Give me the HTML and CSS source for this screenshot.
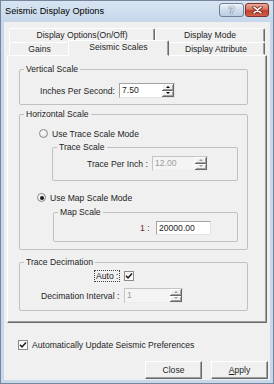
FILE: index.html
```html
<!DOCTYPE html>
<html lang="en">
<head>
  <meta charset="UTF-8" />
  <meta name="viewport" content="width=device-width, initial-scale=1.0" />
  <title>Seismic Display Options</title>
  <link rel="stylesheet" href="styles.css">
</head>
<body>
  <div class="window">
    <!-- ----------  TITLE BAR  ---------- -->
    <div class="titlebar">
      <span class="title">Seismic Display Options</span>
      <div class="caption">
        <span class="cap-btn cap-help">?</span>
        <span class="cap-btn cap-close">
          <svg width="11" height="8" viewBox="0 0 11 8">
            <path d="M2 1.2 L9 6.8 M9 1.2 L2 6.8" stroke="#6a2319" stroke-width="3.2" stroke-linecap="round"/>
            <path d="M2 1.2 L9 6.8 M9 1.2 L2 6.8" stroke="#fff" stroke-width="1.6" stroke-linecap="round"/>
          </svg>
        </span>
      </div>
    </div>

    <div class="client">
      <!-- ----------  TABS  ---------- -->
      <div class="tabs">
        <div class="tab-row back">
          <div class="tab w-opts">Display Options(On/Off)</div>
          <div class="tab w-mode">Display Mode</div>
        </div>
        <div class="tab-row front">
          <div class="tab w-gains">Gains</div>
          <div class="tab active w-scales">Seismic Scales</div>
          <div class="tab w-attr">Display Attribute</div>
        </div>
      </div>

      <!-- ----------  TAB PAGE  ---------- -->
      <div class="panel">
        <fieldset class="group g-vertical">
          <legend>Vertical Scale</legend>
          <div class="row row-ips">
            <span class="lbl lbl-ips">Inches Per Second:</span>
            <div class="spin w-ips">
              <span class="spin-val">7.50</span>
              <span class="spin-btns"><span class="sb up"></span><span class="sb down"></span></span>
            </div>
          </div>
        </fieldset>

        <fieldset class="group g-horizontal">
          <legend>Horizontal Scale</legend>
          <div class="row radio-row r-trace">
            <span class="radio"></span>
            <span>Use Trace Scale Mode</span>
          </div>

          <fieldset class="group g-trace">
            <legend>Trace Scale</legend>
            <div class="row row-tpi">
              <span class="lbl lbl-tpi">Trace Per Inch :</span>
              <div class="spin disabled w-tpi">
                <span class="spin-val">12.00</span>
                <span class="spin-btns"><span class="sb up"></span><span class="sb down"></span></span>
              </div>
            </div>
          </fieldset>

          <div class="row radio-row r-map">
            <span class="radio checked"></span>
            <span>Use Map Scale Mode</span>
          </div>

          <fieldset class="group g-map">
            <legend>Map Scale</legend>
            <div class="row row-map">
              <span class="lbl lbl-ratio">1 :</span>
              <div class="textbox">20000.00</div>
            </div>
          </fieldset>
        </fieldset>

        <fieldset class="group g-decim">
          <legend>Trace Decimation</legend>
          <div class="row row-auto">
            <span class="lbl lbl-auto">Auto :</span>
            <span class="check">
              <svg width="8" height="8" viewBox="0 0 8 8"><path d="M1 3.8 L3 6 L7 1.5" fill="none" stroke="#1a1a1a" stroke-width="1.5"/></svg>
            </span>
          </div>
          <div class="row row-decim">
            <span class="lbl lbl-decim">Decimation Interval :</span>
            <div class="spin disabled w-decim">
              <span class="spin-val">1</span>
              <span class="spin-btns"><span class="sb up"></span><span class="sb down"></span></span>
            </div>
          </div>
        </fieldset>
      </div>

      <!-- ----------  FOOTER  ---------- -->
      <div class="row check-row">
        <span class="check">
          <svg width="8" height="8" viewBox="0 0 8 8"><path d="M1 3.8 L3 6 L7 1.5" fill="none" stroke="#1a1a1a" stroke-width="1.5"/></svg>
        </span>
        <span>Automatically Update Seismic Preferences</span>
      </div>

      <div class="actions">
        <button class="btn">Close</button>
        <button class="btn"><u>A</u>pply</button>
      </div>
    </div>
  </div>
</body>
</html>
```

FILE: styles.css
```css
/* —————— RESET —————— */
*{margin:0;padding:0;box-sizing:border-box;}
body{
  background:#fff;
  font-family:"Liberation Sans",Arial,sans-serif;
  font-size:8.6px;
  color:#1e1e1e;
}

/* —————— WINDOW FRAME —————— */
.window{
  width:274px;
  height:384px;
  border:1px solid #74879f;
  background:#c8d8eb;
  display:flex;
  flex-direction:column;
}
.titlebar{
  height:21px;
  flex:none;
  display:flex;
  justify-content:space-between;
  align-items:flex-start;
  padding:2px 4px 0 4px;
  background:linear-gradient(#d8e4f2,#c6d7eb);
}
.title{
  font-size:9.2px;
  line-height:16px;
  color:#000;
}
.caption{display:flex;gap:1px;}
.cap-btn{
  height:14px;
  border:1px solid #6f7f96;
  border-radius:3px;
  display:flex;
  align-items:center;
  justify-content:center;
}
.cap-help{
  width:25px;
  background:linear-gradient(#eef3f9,#cfdcec 50%,#bccde3);
  color:#f4f7fb;
  font-weight:bold;
  font-size:10px;
  text-shadow:0 0 1px #3d4c63,0 0 1px #3d4c63;
}
.cap-close{
  width:24px;
  border-color:#7d3128;
  background:linear-gradient(#e9ab9c,#d3705f 45%,#c5402e 55%,#d2604a);
}

/* —————— CLIENT AREA —————— */
.client{
  height:358px;
  flex:none;
  margin:0 3px;
  padding:6px 3px 0 3px;
  background:#f0f0f0;
}

/* —————— TABS —————— */
.tabs{margin-left:2px;}
.tab-row{display:flex;align-items:flex-start;}
.tab-row.back{height:14px;}
.tab-row.front{height:13px;}
.tab{
  height:100%;
  text-align:center;
  white-space:nowrap;
  border:1px solid;
  border-color:#fff #696969 transparent #fff;
  border-radius:2px 2px 0 0;
  box-shadow:inset -1px 0 0 #a0a0a0;
  background:#f0f0f0;
}
.back .tab{line-height:12px;}
.front .tab{height:13px;line-height:12px;}
.tab.active{
  position:relative;
  z-index:1;
  height:16px;
  margin:-2px -2px -1px -2px;
  line-height:12px;
}
.w-opts{width:146px;}
.w-mode{width:110px;}
.w-gains{width:61px;}
.w-scales{width:101px;}
.w-attr{width:98px;}

.panel{
  height:268px;
  border:1px solid;
  border-color:#fff #696969 #696969 #fff;
  box-shadow:inset -1px -1px 0 #a0a0a0;
  background:#f0f0f0;
  padding-left:11px;
}

/* —————— GROUP BOXES —————— */
.group{
  width:229px;
  border:1px solid #c0c0c0;
  border-radius:2px;
  min-inline-size:0;
}
.group legend{
  margin-left:4px;
  padding:0 2px;
  line-height:13px;
}
.g-vertical{margin-top:7px;padding:7px 0 6px;}
.g-horizontal{margin-top:3px;padding:6px 0 7px;}
.g-trace{width:186px;margin:1px 0 0 32px;padding:2px 0 9px;}
.g-map{width:185px;margin:2px 0 0 33px;padding:2px 0 6px;}
.g-decim{margin-top:6px;padding:1px 0 7px;}

/* —————— ROWS —————— */
.row{display:flex;align-items:center;white-space:nowrap;}
.lbl{flex:none;}
.row-ips{height:15px;padding-left:20px;}
.lbl-ips{width:76px;margin-right:3px;}
.row-tpi{height:15px;padding-left:34px;}
.lbl-tpi{width:62px;margin-right:3px;}
.row-map{height:14px;padding-left:86px;}
.lbl-ratio{width:13px;margin-right:3px;color:#6b2d2d;}
.row-auto{height:11px;padding-left:75px;}
.lbl-auto{
  width:24px;
  padding-left:1px;
  line-height:10px;
  outline:1px dotted #444;
  margin-right:5px;
}
.row-decim{height:15px;margin-top:7px;padding-left:21px;}
.lbl-decim{width:80px;margin-right:3px;}

.radio-row{height:13px;gap:4px;}
.r-trace{padding-left:19px;}
.r-map{padding-left:17px;margin-top:10px;}

/* —————— CONTROLS —————— */
.spin{
  display:flex;
  height:15px;
  border:1px solid #a3a3a3;
  border-right-color:#e2e2e2;
  border-bottom-color:#e2e2e2;
  background:#fff;
}
.w-ips,.w-tpi{width:56px;}
.w-decim{width:59px;}
.spin-val{flex:1;padding-left:2px;line-height:13px;}
.spin-btns{width:12px;display:flex;flex-direction:column;}
.sb{
  flex:1;
  display:flex;
  align-items:center;
  justify-content:center;
  background:#f0f0f0;
  border-right:1px solid #696969;
  border-bottom:1px solid #696969;
  box-shadow:inset 1px 1px 0 #fff,inset -1px -1px 0 #a0a0a0;
}
.sb::after{content:"";border-left:2px solid transparent;border-right:2px solid transparent;}
.sb.up::after{border-bottom:2px solid #000;}
.sb.down::after{border-top:2px solid #000;}
.spin.disabled{background:#f4f4f4;border-color:#c4c4c4 #ececec #ececec #c4c4c4;color:#9c9c9c;}
.spin.disabled .sb.up::after{border-bottom-color:#a0a0a0;}
.spin.disabled .sb.down::after{border-top-color:#a0a0a0;}

.textbox{
  width:55px;
  height:14px;
  line-height:12px;
  padding-left:2px;
  border:1px solid #a3a3a3;
  border-right-color:#e2e2e2;
  border-bottom-color:#e2e2e2;
  background:#fff;
}

.radio{
  flex:none;
  width:9px;
  height:9px;
  border:1px solid #8a8a8a;
  border-radius:50%;
  background:radial-gradient(circle at 40% 40%,#fff,#dcdcdc);
  display:flex;
  align-items:center;
  justify-content:center;
}
.radio.checked::after{
  content:"";
  width:4px;
  height:4px;
  border-radius:50%;
  background:#1c1c1c;
}

.check{
  flex:none;
  width:10px;
  height:10px;
  border:1px solid #8a8a8a;
  background:linear-gradient(135deg,#f4f4f4,#fff);
  display:flex;
  align-items:center;
  justify-content:center;
}

/* —————— FOOTER —————— */
.check-row{height:11px;margin-top:16px;padding-left:11px;gap:4px;}
.actions{
  display:flex;
  justify-content:flex-end;
  gap:9px;
  margin:11px -1px 0 0;
}
.btn{
  width:57px;
  height:18px;
  font:inherit;
  color:#1e1e1e;
  background:#f0f0f0;
  border:1px solid;
  border-color:#fff #696969 #696969 #fff;
  box-shadow:inset -1px -1px 0 #a0a0a0;
}
```
